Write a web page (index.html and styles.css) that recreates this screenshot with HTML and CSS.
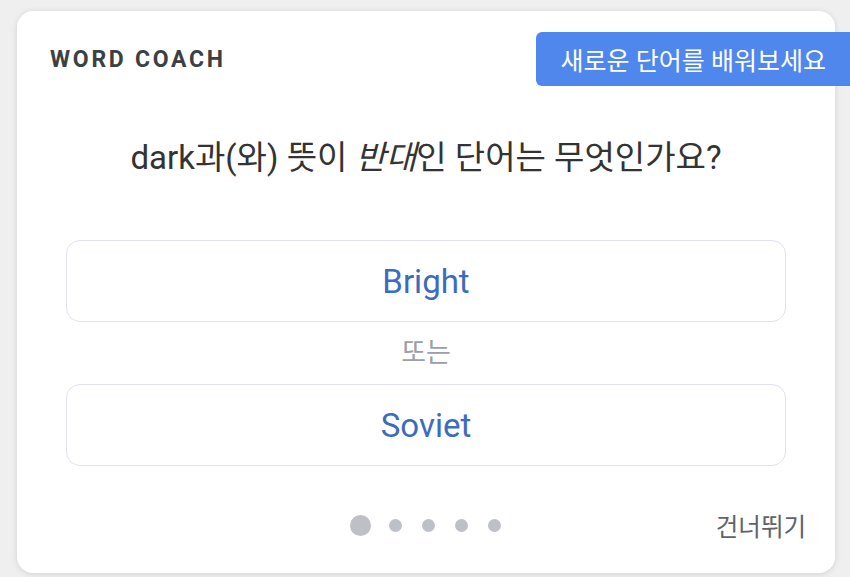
FILE: index.html
```html
<!DOCTYPE html>
<html lang="ko">
<head>
  <meta charset="UTF-8">
  <title>Word Coach</title>
  <link rel="stylesheet" href="styles.css">
</head>
<body>
  <div class="card">
    <div class="card-header">
      <h2 class="title">WORD COACH</h2>
      <button class="learn-btn">새로운 단어를 배워보세요</button>
    </div>

    <p class="question">dark과(와) 뜻이 <em>반대</em>인 단어는 무엇인가요?</p>

    <div class="options">
      <button class="option">Bright</button>
      <div class="or">또는</div>
      <button class="option">Soviet</button>
    </div>

    <div class="card-footer">
      <div class="dots">
        <span class="dot active"></span>
        <span class="dot"></span>
        <span class="dot"></span>
        <span class="dot"></span>
        <span class="dot"></span>
      </div>
      <a class="skip">건너뛰기</a>
    </div>
  </div>
</body>
</html>
```

FILE: styles.css
```css
body {
  margin: 0;
  padding: 11px 15px 4px 17px;
  background-color: #efefef;
  font-family: Roboto, "Noto Sans CJK KR", sans-serif;
  color: #3c4043;
}

.card {
  width: 818px;
  height: 562px;
  box-sizing: border-box;
  background: #fff;
  border-radius: 16px;
  box-shadow: 0 1px 6px rgba(0, 0, 0, 0.12);
}

.card-header {
  display: flex;
  align-items: center;
  justify-content: space-between;
  padding: 21px 0 0 33px;
  margin-right: -15px;
}

.title {
  margin: 0;
  font-size: 23px;
  font-weight: 700;
  letter-spacing: 2.7px;
  color: #3c4043;
}

.learn-btn {
  height: 54px;
  padding: 0 24px 0 25px;
  border: none;
  border-radius: 6px 0 0 6px;
  background-color: #4f87ec;
  color: #fff;
  font-family: inherit;
  font-size: 25px;
}

.question {
  margin: 52px 0 0;
  line-height: 40px;
  text-align: center;
  font-size: 33px;
  color: #333;
}

.question em {
  font-style: italic;
}

.options {
  margin-top: 62px;
  padding: 0 49px;
}

.option {
  display: block;
  width: 100%;
  height: 82px;
  border: 1.5px solid #e0e2f0;
  border-radius: 14px;
  background: #fff;
  color: #3d6bbd;
  font-family: inherit;
  font-size: 33px;
}

.or {
  margin: 16px 0;
  line-height: 30px;
  text-align: center;
  font-size: 27px;
  color: #9aa0a6;
}

.card-footer {
  display: grid;
  grid-template-columns: 1fr auto 1fr;
  align-items: center;
  height: 40px;
  margin-top: 39px;
  padding-right: 29px;
}

.dots {
  grid-column: 2;
  display: flex;
  align-items: center;
  gap: 20px;
  margin-left: 28px;
}

.dot {
  width: 13px;
  height: 13px;
  border-radius: 50%;
  background-color: #bdc0c6;
}

.dot.active {
  width: 21px;
  height: 21px;
  margin-right: -2px;
}

.skip {
  justify-self: end;
  font-size: 24.5px;
  color: #5f6368;
}
```
